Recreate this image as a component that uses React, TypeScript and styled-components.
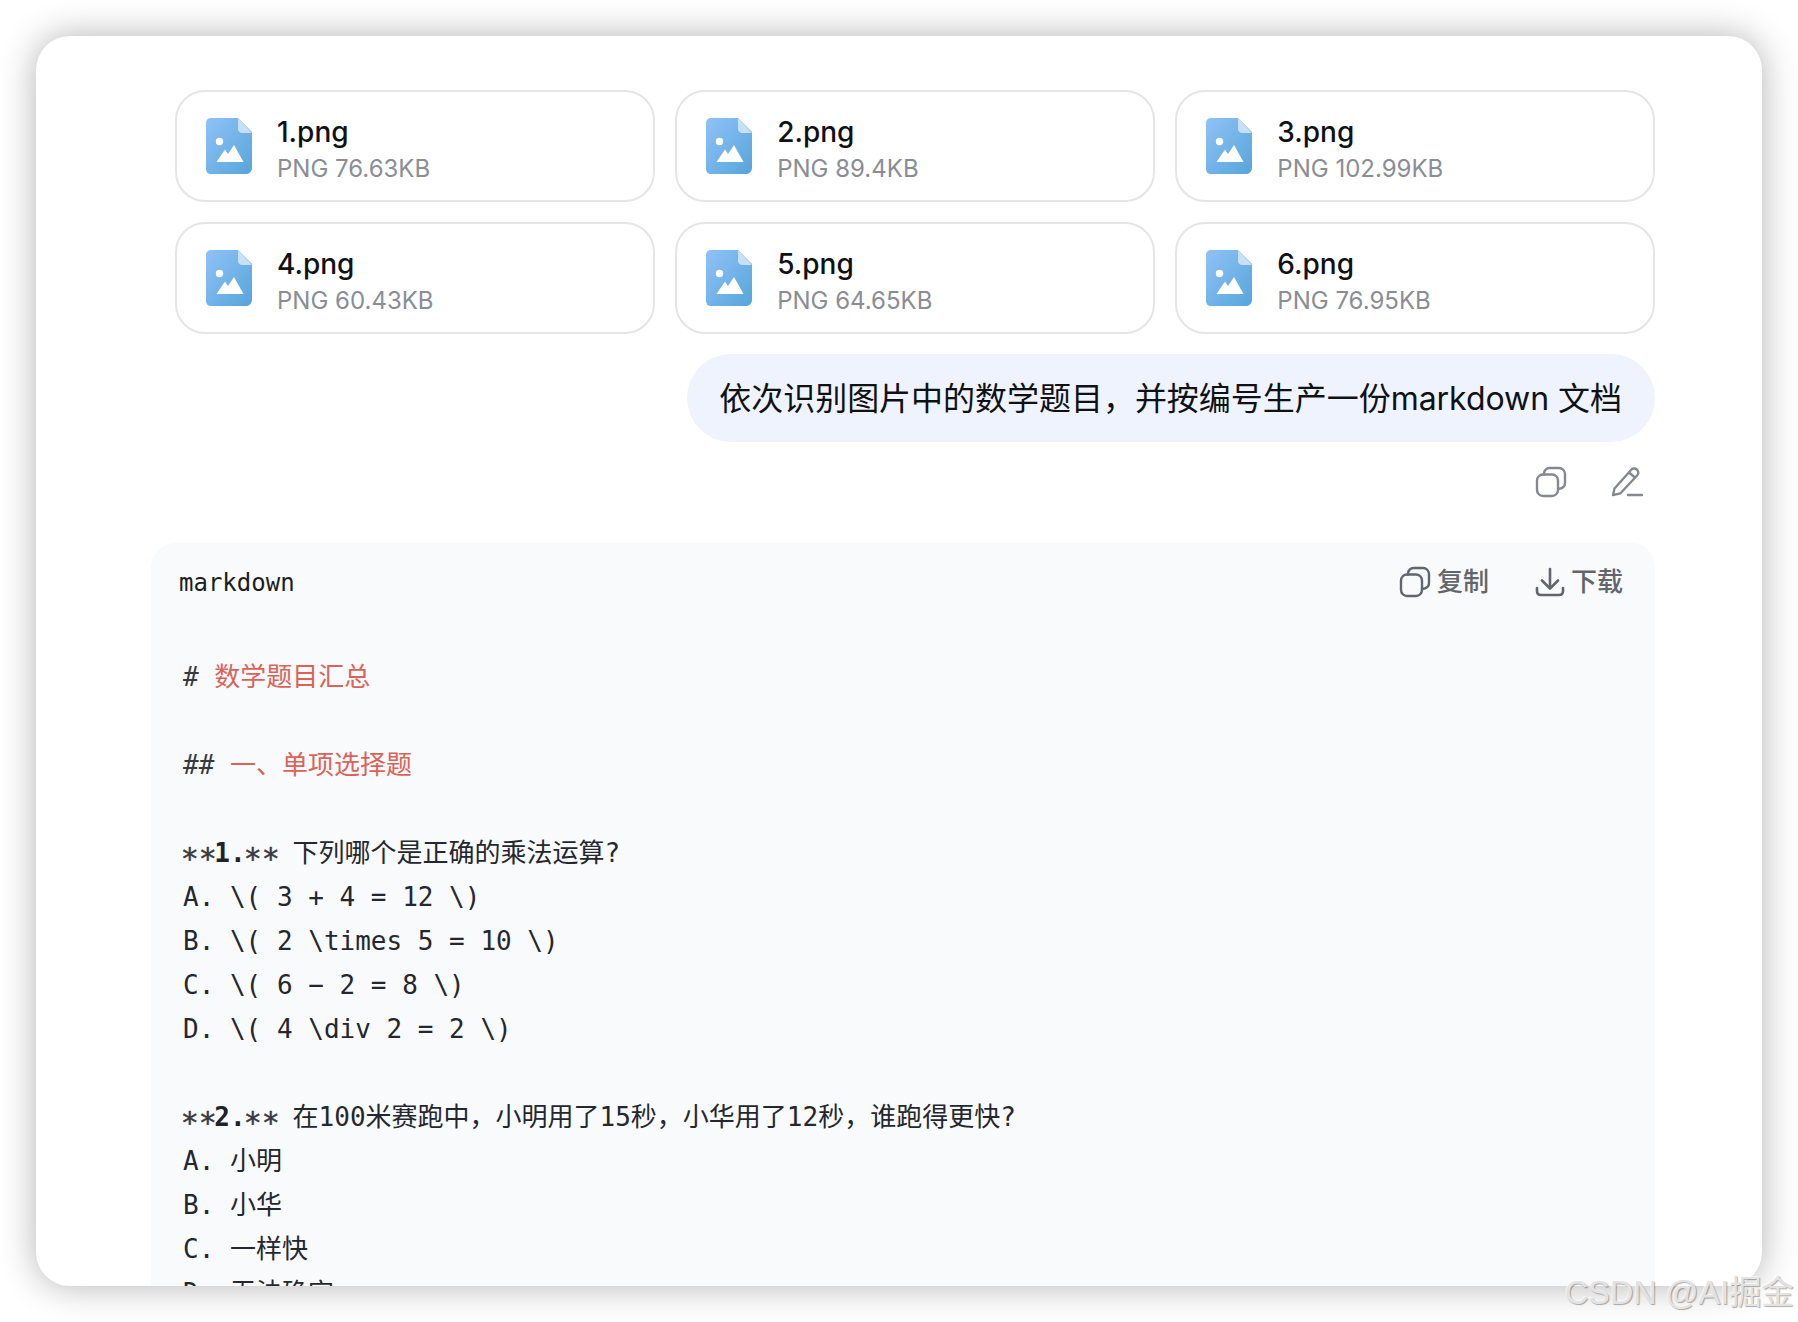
import React from "react";
import styled, { createGlobalStyle } from "styled-components";

const Global = createGlobalStyle`
  html, body { margin: 0; padding: 0; background: #fff; }
  body { width: 1798px; height: 1322px; overflow: hidden; position: relative; }
`;

const Page = styled.div`
  box-sizing: border-box;
  width: 1798px;
  height: 1322px;
  padding: 36px;
  position: relative;
  overflow: hidden;
  background: #fff;
`;

const Win = styled.main`
  box-sizing: border-box;
  width: 1726px;
  height: 1250px;
  padding: 54px 107px 0 115px;
  background: #fff;
  border-radius: 34px;
  box-shadow: 0 0 36px rgba(0, 0, 0, 0.3);
  overflow: hidden;
  display: flex;
  flex-direction: column;
  align-items: stretch;
  font-family: Inter, "Noto Sans CJK SC", sans-serif;
`;

const FileGrid = styled.section`
  margin-left: 24px;
  display: grid;
  grid-template-columns: repeat(3, 1fr);
  gap: 20px 20.5px;
`;

const FileCard = styled.div`
  box-sizing: border-box;
  height: 112px;
  border: 2px solid #e5e5e7;
  border-radius: 30px;
  display: flex;
  align-items: center;
  padding-left: 29px;
  gap: 25px;
`;

const FileText = styled.div`
  display: flex;
  flex-direction: column;
  padding-top: 8px;
`;

const FileName = styled.div`
  font-size: 28px;
  line-height: 36px;
  font-weight: 500;
  color: #0f1115;
`;

const FileMeta = styled.div`
  margin-top: 1px;
  font-size: 24px;
  line-height: 36px;
  color: #8a8d94;
`;

const Bubble = styled.div`
  align-self: flex-end;
  margin-top: 20px;
  box-sizing: border-box;
  height: 88px;
  padding: 0 33px 4px 32px;
  display: flex;
  align-items: center;
  white-space: nowrap;
  background: #eef3fe;
  border-radius: 44px;
  font-size: 32px;
  letter-spacing: -0.03px;
  color: #0f1115;
`;

const Actions = styled.div`
  align-self: flex-end;
  margin-top: 24px;
  margin-right: 12px;
  display: flex;
  gap: 44px;
  height: 32px;
  color: #85888f;
`;

const CodeBlock = styled.section`
  margin-top: 45px;
  border-radius: 24px 24px 0 0;
  background: #f9fafc;
  flex: 1;
  padding: 18px 32px 0 28px;
  overflow: hidden;
`;

const CodeHead = styled.header`
  display: flex;
  align-items: center;
  justify-content: space-between;
  height: 44px;
`;

const Lang = styled.span`
  font-family: "DejaVu Sans Mono", "Noto Sans CJK SC", monospace;
  font-size: 24px;
  color: #1b1d22;
`;

const HeadTools = styled.div`
  display: flex;
  gap: 46px;
  color: #61656d;
`;

const HeadTool = styled.span`
  display: flex;
  align-items: center;
  gap: 6px;
  font-size: 26px;
  font-weight: 500;
  line-height: 30px;
  padding-bottom: 2px;
`;

const Code = styled.pre`
  margin: 50px 0 0 4px;
  font-family: "DejaVu Sans Mono", "Noto Sans CJK SC", monospace;
  font-size: 26px;
  line-height: 44px;
  color: #24272e;
`;

const Heading = styled.span`
  color: #d9635a;
`;

const Mark = styled.span`
  color: #383a42;
`;

const Stars = styled.span`
  color: #383a42;
  display: inline-block;
  transform: translateY(6px) scale(1.15);
  -webkit-text-stroke: 0.4px #383a42;
`;

const Strong = styled.b`
  font-weight: 700;
  color: #1f2228;
`;

const Watermark = styled.div`
  position: absolute;
  right: 4px;
  bottom: 9px;
  font-family: "Liberation Sans", "Noto Sans CJK SC", sans-serif;
  font-size: 32.4px;
  line-height: 40px;
  color: #e3e3e3;
  text-shadow: 1px 1px 1px rgba(0, 0, 0, 0.32), -1px -1px 0 rgba(255, 255, 255, 0.6);
  white-space: nowrap;
`;

const FileIcon = () => (
  <svg width="46" height="56" viewBox="0 0 46 56">
    <defs>
      <linearGradient id="fileG" x1="0" y1="0" x2="1" y2="1">
        <stop offset="0" stopColor="#90c2f7" />
        <stop offset="1" stopColor="#56a5da" />
      </linearGradient>
    </defs>
    <path d="M5 0H32L46 14V50C46 53.3 43.3 56 40 56H5C2 56 0 54 0 51V5C0 2 2 0 5 0Z" fill="url(#fileG)" />
    <path d="M32 0L46 15H36C33.8 15 32 13.2 32 11Z" fill="#c6e0f8" />
    <circle cx="13.5" cy="23.5" r="3.7" fill="#fff" />
    <path d="M10.5 44L19 31.5L22 36L28 27L37.5 44Z" fill="#fff" />
  </svg>
);

const CopyIcon = ({ size = 32 }: { size?: number }) => (
  <svg width={size} height={size} viewBox="0 0 32 32" fill="none" stroke="currentColor" strokeWidth="2.4">
    <rect x="2" y="8.5" width="21" height="21.5" rx="6" />
    <path d="M9 8.5V7.5C9 4.5 11.5 2 14.5 2H24C27.3 2 30 4.7 30 8V17C30 20 28 22.5 23 23" strokeLinecap="round" />
  </svg>
);

const EditIcon = () => (
  <svg width="32" height="32" viewBox="0 0 32 32" fill="none" stroke="currentColor" strokeWidth="2.4" strokeLinejoin="round">
    <path d="M2 29L3.5 22.5L20 4C21.4 2.3 24 2 25.8 3.5C27.6 5 27.8 7.6 26.3 9.3L9.5 27.3Z" />
    <path d="M18 6.5L24.5 12" />
    <path d="M17 29H31" strokeLinecap="round" />
  </svg>
);

const DownloadIcon = () => (
  <svg width="30" height="30" viewBox="0 0 30 30" fill="none" stroke="currentColor" strokeWidth="2.6" strokeLinecap="round" strokeLinejoin="round">
    <path d="M15 2V21" />
    <path d="M7 13.5L15 21.5L23 13.5" />
    <path d="M2 21V24C2 26.5 3.5 28 6 28H24C26.5 28 28 26.5 28 24V21" />
  </svg>
);

const files = [
  ["1.png", "PNG 76.63KB"],
  ["2.png", "PNG 89.4KB"],
  ["3.png", "PNG 102.99KB"],
  ["4.png", "PNG 60.43KB"],
  ["5.png", "PNG 64.65KB"],
  ["6.png", "PNG 76.95KB"],
];

export default function App() {
  return (
    <Page>
      <Global />
      <Win>
        <FileGrid>
          {files.map(([n, m]) => (
            <FileCard key={n}>
              <FileIcon />
              <FileText>
                <FileName>{n}</FileName>
                <FileMeta>{m}</FileMeta>
              </FileText>
            </FileCard>
          ))}
        </FileGrid>
        <Bubble>依次识别图片中的数学题目，并按编号生产一份markdown 文档</Bubble>
        <Actions>
          <CopyIcon />
          <EditIcon />
        </Actions>
        <CodeBlock>
          <CodeHead>
            <Lang>markdown</Lang>
            <HeadTools>
              <HeadTool><CopyIcon />复制</HeadTool>
              <HeadTool><DownloadIcon />下载</HeadTool>
            </HeadTools>
          </CodeHead>
          <Code>
            <Mark># </Mark><Heading>数学题目汇总</Heading>{"\n\n"}
            <Mark>## </Mark><Heading>一、单项选择题</Heading>{"\n\n"}
            <Stars>**</Stars><Strong>1.</Strong><Stars>**</Stars>{" 下列哪个是正确的乘法运算?\nA. \\( 3 + 4 = 12 \\)\nB. \\( 2 \\times 5 = 10 \\)\nC. \\( 6 − 2 = 8 \\)\nD. \\( 4 \\div 2 = 2 \\)\n\n"}
            <Stars>**</Stars><Strong>2.</Strong><Stars>**</Stars>{" 在100米赛跑中，小明用了15秒，小华用了12秒，谁跑得更快?\nA. 小明\nB. 小华\nC. 一样快\nD. 无法确定"}
          </Code>
        </CodeBlock>
      </Win>
      <Watermark>CSDN @AI掘金</Watermark>
    </Page>
  );
}
